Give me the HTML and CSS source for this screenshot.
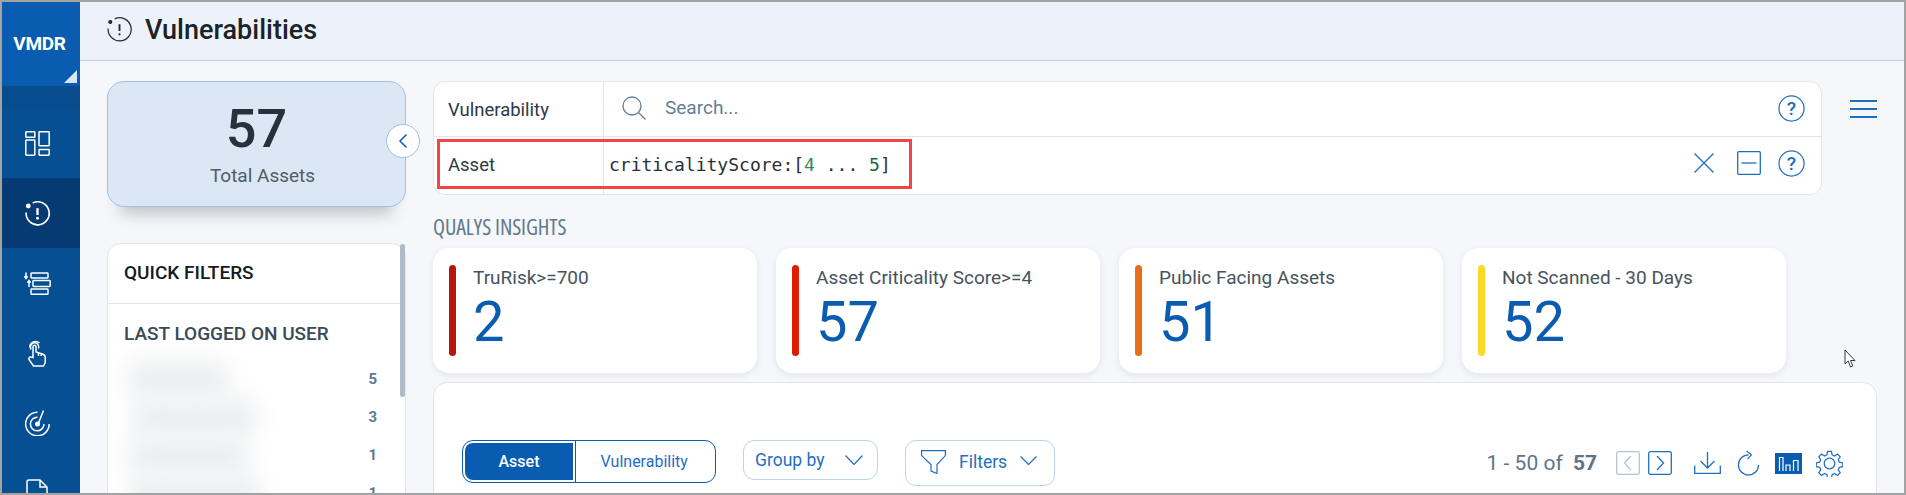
FILE: index.html
```html
<!DOCTYPE html>
<html lang="en">
<head>
<meta charset="utf-8">
<title>Vulnerabilities</title>
<link rel="stylesheet" href="styles.css">
</head>
<body>
<div class="app">
  <aside class="rail">
    <div class="brand"><span>VMDR</span><i class="corner"></i></div>
    <div class="rail-gap"></div>
    <nav class="rail-nav">
      <a class="rail-item"><svg width="25" height="25" viewBox="0 0 25 25" fill="none" stroke="#fff" stroke-width="1.5"><rect x=".8" y=".8" width="9" height="5.5" rx=".6"/><rect x=".8" y="9" width="9" height="15.2" rx=".6"/><rect x="14" y=".8" width="10.200" height="14" rx=".6"/><rect x="14" y="18.500" width="10.200" height="5.700" rx=".6"/></svg></a>
      <a class="rail-item active"><svg width="25" height="25" viewBox="0 0 26 26" fill="none" stroke="#fff" stroke-width="1.7"><path d="M8 2A12 12 0 1 1 1.200 12"/><circle cx="3.400" cy="5.200" r="2.500" fill="#fff" stroke="none"/><path d="M13 7.500v7" stroke-width="2.500"/><circle cx="13" cy="18" r="1.500" fill="#fff" stroke="none"/></svg></a>
      <a class="rail-item"><svg width="27" height="23" viewBox="0 0 27 23" fill="none" stroke="#fff" stroke-width="1.500"><rect x="7" y="1" width="17" height="5" rx=".7"/><rect x="9" y="8.500" width="17.200" height="6" rx=".7"/><rect x="7" y="17" width="17" height="5.300" rx=".7"/><path d="M2 .5v6M.4 4.300L2 6.500l1.600-2.200M5 15V8.500M3.400 10.700L5 8.500l1.600 2.200"/></svg></a>
      <a class="rail-item"><svg width="18" height="27" viewBox="0 0 18 27" fill="none" stroke="#fff" stroke-width="1.500"><path d="M3.200 9.500A4.200 4.200 0 1 1 10.500 8.500"/><path d="M1.800 7A5.800 5.800 0 0 1 11.500 3"/><path d="M5 17.500V6.800a1.500 1.500 0 0 1 3 0V12l6.500 2c1.600.6 2.700 1.500 2.700 3v5.500L15.500 26H5.500L1 19.500c-.5-1 0-2.300 1.300-2.500 1-.1 1.800.2 2.700.5z"/><path d="M10.500 12.500v3.500M13.300 13.500V16"/></svg></a>
      <a class="rail-item"><svg width="25" height="26" viewBox="0 0 25 26" fill="none" stroke="#fff" stroke-width="1.500"><path d="M12.500 2.200A11.800 11.800 0 1 0 24.200 14"/><path d="M12.500 7.200A6.800 6.800 0 1 0 19 14"/><circle cx="12.500" cy="14" r="2.500" fill="#fff" stroke="none"/><path d="M13.500 13L18.500 .5"/></svg></a>
      <a class="rail-item"><svg width="22" height="28" viewBox="0 0 22 28" fill="none" stroke="#fff" stroke-width="1.500"><path d="M1 27V3a2 2 0 0 1 2-2h11l7 7v19z"/><path d="M14 1v7h7"/></svg></a>
    </nav>
  </aside>
  <div class="main">
    <header class="topbar">
      <svg class="topbar-icon" width="25" height="25" viewBox="0 0 26 26" fill="none" stroke="#222b33" stroke-width="1.300"><path d="M8 2A12 12 0 1 1 1.200 12"/><circle cx="3.400" cy="5.200" r="2.200" fill="#222b33" stroke="none"/><path d="M13 7.500v7" stroke-width="2"/><circle cx="13" cy="18" r="1.200" fill="#222b33" stroke="none"/></svg>
      <h1>Vulnerabilities</h1>
    </header>
    <div class="content">
      <div class="left">
        <section class="total">
          <div class="total-num">57</div>
          <div class="total-label">Total Assets</div>
          <button class="collapse"><svg width="10" height="16" viewBox="0 0 10 16" fill="none" stroke="#0a5cb0" stroke-width="1.500"><path d="M8.500 1.500L2 8l6.500 6.500"/></svg></button>
        </section>
        <section class="quick">
          <div class="quick-title">QUICK FILTERS</div>
          <div class="quick-body">
            <h2>LAST LOGGED ON USER</h2>
            <ul class="users">
              <li><span class="blur b1"></span><b>5</b></li>
              <li><span class="blur b2"></span><b>3</b></li>
              <li><span class="blur b3"></span><b>1</b></li>
              <li><span class="blur b4"></span><b>1</b></li>
            </ul>
          </div>
          <i class="scroll"></i>
        </section>
      </div>
      <div class="right">
        <div class="search-row">
          <div class="search">
            <div class="s-row first">
              <div class="s-label">Vulnerability</div>
              <div class="s-field">
                <svg class="glass" width="24" height="24" viewBox="0 0 24 24" fill="none" stroke="#5f7f96" stroke-width="1.300"><circle cx="10" cy="10" r="9"/><path d="M16.500 16.500L23.500 23.500"/></svg>
                <span class="placeholder">Search...</span>
              </div>
              <div class="s-actions">
                <svg width="27" height="27" viewBox="0 0 28 28"><circle cx="14" cy="14" r="13" fill="none" stroke="#1f6fc0" stroke-width="1.300"/><text x="14" y="20.500" text-anchor="middle" class="q">?</text></svg>
              </div>
            </div>
            <div class="s-row second">
              <div class="s-label">Asset</div>
              <div class="s-field code">criticalityScore:[<em>4</em> ... <em class="dark">5</em>]</div>
              <div class="s-actions">
                <svg class="act-x" width="20" height="20" viewBox="0 0 20 20" fill="none" stroke="#1f6fc0" stroke-width="1.300"><path d="M.5.5l19 19M19.500.5l-19 19"/></svg>
                <svg width="24" height="24" viewBox="0 0 24 24" fill="none" stroke="#1f6fc0" stroke-width="1.300"><rect x=".7" y=".7" width="22.600" height="22.600" rx="1"/><path d="M4.500 12h15"/></svg>
                <svg width="27" height="27" viewBox="0 0 28 28"><circle cx="14" cy="14" r="13" fill="none" stroke="#1f6fc0" stroke-width="1.300"/><text x="14" y="20.500" text-anchor="middle" class="q">?</text></svg>
              </div>
            </div>
            <i class="redbox"></i>
          </div>
          <div class="burger"><i></i><i></i><i></i></div>
        </div>
        <div class="insights-title">QUALYS INSIGHTS</div>
        <div class="cards">
          <div class="card"><i class="bar c1"></i><div><div class="c-label">TruRisk&gt;=700</div><div class="c-num">2</div></div></div>
          <div class="card"><i class="bar c2"></i><div><div class="c-label">Asset Criticality Score&gt;=4</div><div class="c-num">57</div></div></div>
          <div class="card"><i class="bar c3"></i><div><div class="c-label">Public Facing Assets</div><div class="c-num">51</div></div></div>
          <div class="card"><i class="bar c4"></i><div><div class="c-label">Not Scanned - 30 Days</div><div class="c-num">52</div></div></div>
          <svg class="cursor" width="12" height="20" viewBox="0 0 12 20"><path d="M1 1v14l3.200-3 2.300 6 2.300-1-2.300-5.500h4.500z" fill="#fff" stroke="#222" stroke-width=".9"/></svg>
        </div>
        <section class="panel">
          <div class="seg"><span class="seg-on"><b>Asset</b></span><span class="seg-off">Vulnerability</span></div>
          <button class="drop group">Group by<svg width="18" height="10" viewBox="0 0 18 10" fill="none" stroke="#1f6fc0" stroke-width="1.200"><path d="M.5.5L9 9.500 17.500.5"/></svg></button>
          <button class="drop filters"><svg width="25" height="24" viewBox="0 0 25 24" fill="none" stroke="#1f6fc0" stroke-width="1.200"><path d="M.6.6h23.800v5L16 14.500v9l-6-2.500v-6.500L.6 5.600z"/></svg>Filters<svg class="chev-up" width="17" height="9" viewBox="0 0 17 9" fill="none" stroke="#1f6fc0" stroke-width="1.200"><path d="M.5.5l8 8 8-8"/></svg></button>
          <div class="pager">
            <span class="range">1 - 50 of <b>57</b></span>
            <svg class="prev" width="24" height="24" viewBox="0 0 24 24" fill="none" stroke="#b4c4d1" stroke-width="1.300"><rect x=".7" y=".7" width="22.600" height="22.600" rx="1.500"/><path d="M15 5l-6.500 7 6.500 7"/></svg>
            <svg class="next" width="24" height="24" viewBox="0 0 24 24" fill="none" stroke="#1f6fc0" stroke-width="1.300"><rect x=".7" y=".7" width="22.600" height="22.600" rx="1.500"/><path d="M9 5l6.500 7L9 19"/></svg>
            <svg class="dl" width="27" height="22" viewBox="0 0 27 22" fill="none" stroke="#1f6fc0" stroke-width="1.300"><path d="M13.500 0v15.500M6.500 9l7 7 7-7M.7 13.500v7.800h25.600v-7.800"/></svg>
            <svg class="rf" width="23" height="26" viewBox="0 0 24 26" fill="none" stroke="#1f6fc0" stroke-width="1.300"><path d="M12 4.500A10.500 10.500 0 1 0 22.500 15"/><path d="M10 .5L15 4.500l-4 4.500"/></svg>
            <svg class="ch" width="27" height="21" viewBox="0 0 27 21"><rect width="27" height="21" fill="#0a5cb0"/><path d="M4.500 18V4.500h3.500V18M11 18v-6h4v6M18.500 18V7.500h4.500V18" fill="none" stroke="#fff" stroke-width="1.200"/></svg>
            <svg width="27" height="27" viewBox="0 0 28 28" fill="none" stroke="#1f6fc0" stroke-width="1.300"><circle cx="14" cy="14" r="5.500"/><path d="M12 1.500h4l.7 3.600 2.500 1.100 3.100-2 2.800 2.800-2 3.100 1.100 2.500 3.600.7v4l-3.600.7-1.100 2.500 2 3.100-2.800 2.800-3.100-2-2.500 1.100-.7 3.600h-4l-.7-3.600-2.500-1.100-3.100 2-2.800-2.800 2-3.100-1.100-2.500-3.600-.7v-4l3.600-.7 1.100-2.500-2-3.100 2.800-2.800 3.100 2 2.500-1.100z"/></svg>
          </div>
        </section>
      </div>
    </div>
  </div>
</div>
</body>
</html>
```
FILE: styles.css
```css
* { box-sizing: border-box; }
html, body { margin: 0; height: 100%; }
body { background: #fff; font-family: Roboto, "Liberation Sans", sans-serif; overflow: hidden; }
.app { width: 1906px; height: 495px; border: 2px solid #a3a3a3; display: flex; overflow: hidden; background: #f5f7fa; }

.rail { width: 78px; flex: none; background: #064f93; display: flex; flex-direction: column; overflow: hidden; }
.brand { height: 84px; flex: none; background: #0a5cb0; position: relative; color: #fff; font-weight: 700; font-size: 19px; display: flex; justify-content: center; padding-top: 30px; padding-right: 3px; }
.brand span { letter-spacing: -.3px; }
.corner { position: absolute; right: 3px; bottom: 3px; width: 13px; height: 13px; background: #d9e6f4; clip-path: polygon(100% 0, 100% 100%, 0 100%); }
.rail-gap { height: 22px; flex: none; background: #064c8e; }
.rail-nav { display: flex; flex-direction: column; flex: none; }
.rail-item { height: 70px; flex: none; display: flex; align-items: center; justify-content: center; padding-right: 8px; }
.rail-item.active { background: #063a73; }

.main { flex: 1; min-width: 0; display: flex; flex-direction: column; }
.topbar { height: 59px; flex: none; background: #edf2f9; border-bottom: 1px solid #b9d1e9; display: flex; align-items: center; padding-left: 27px; padding-bottom: 3px; }
.topbar h1 { margin: 0 0 0 13px; font-size: 27px; font-weight: 500; color: #1b2229; }
.topbar-icon { flex: none; }

.content { flex: 1; display: flex; min-height: 0; padding: 20px 0 0 27px; }
.left { width: 299px; flex: none; margin-right: 27px; }
.total { height: 126px; position: relative; background: #dbe7f4; border: 1px solid #9dc0e6; border-radius: 17px; box-shadow: 0 20px 16px -14px rgba(50,60,70,.3); text-align: center; padding-top: 15px; }
.total-num { font-size: 54px; line-height: 64px; font-weight: 500; color: #27313b; }
.total-label { font-size: 19px; line-height: 22px; color: #4f5d69; margin: 4px 0 0 12px; }
.collapse { position: absolute; right: -15px; top: 42px; width: 34px; height: 34px; border-radius: 50%; border: 1px solid #9dc0e6; background: #fff; padding: 0; display: flex; align-items: center; justify-content: center; }

.quick { margin-top: 36px; height: 300px; position: relative; background: #fff; border: 1px solid #e2e6ea; border-radius: 14px 14px 0 0; }
.quick-title { height: 60px; border-bottom: 1px solid #dfe3e8; padding: 18px 16px 0; font-size: 19px; line-height: 22px; font-weight: 500; color: #14191f; }
.quick-body { padding: 18px 16px 0; }
.quick-body h2 { margin: 0; font-size: 19px; line-height: 24px; font-weight: 500; color: #3a4a56; }
.users { list-style: none; margin: 0; padding: 0; }
.users li { height: 38px; display: flex; justify-content: space-between; align-items: center; }
.users li:first-child { margin-top: 14px; }
.users b { font-size: 15px; font-weight: 700; color: #5f7a8e; margin-right: 12px; }
.blur { display: block; height: 36px; background: #eceef0; filter: blur(11px); border-radius: 12px; }
.b1 { width: 100px; margin-left: 4px; }
.b2 { width: 125px; margin-left: 8px; }
.b3 { width: 120px; margin-left: 4px; }
.b4 { width: 130px; margin-left: 6px; }
.scroll { position: absolute; right: 0; top: 0; width: 5px; height: 153px; background: #aebcc8; border-radius: 3px; }

.right { flex: 1; min-width: 0; }
.search-row { display: flex; align-items: flex-start; }
.search { width: 1389px; height: 114px; flex: none; position: relative; background: #fff; border: 1px solid #e1e5ea; border-radius: 12px; }
.s-row { display: flex; height: 57px; }
.s-row.first { height: 55px; border-bottom: 1px solid #e1e5ea; }
.s-label { width: 170px; flex: none; border-right: 1px solid #e1e5ea; padding: 16px 0 0 14px; font-size: 18.500px; line-height: 24px; color: #2e3a44; }
.s-field { flex: 1; display: flex; align-items: center; padding-left: 18px; }
.placeholder { margin: -4px 0 0 19px; font-size: 19px; color: #5f7f96; }
.glass { flex: none; margin-top: -2px; }
.code { font-family: "DejaVu Sans Mono", monospace; font-size: 18px; color: #2a2f35; padding-left: 5px; white-space: pre; margin-top: -2px; }
.code em { font-style: normal; color: #2f8a5e; }
.code em.dark { color: #1b6a46; }
.s-actions { display: flex; align-items: center; padding-right: 16px; }
.first .s-actions { padding-bottom: 2px; }
.second .s-actions { padding-bottom: 5px; }
.act-x { margin-right: 23px; }
.second .s-actions svg:nth-child(2) { margin-right: 17px; }
.q { font: 500 20px Roboto, sans-serif; fill: #1f6fc0; }
.redbox { position: absolute; left: 3px; top: 57px; width: 475px; height: 50px; border: 3px solid #f34545; pointer-events: none; }
.burger { margin: 19px 0 0 28px; display: flex; flex-direction: column; gap: 6.500px; }
.burger i { display: block; width: 27px; height: 1.500px; background: #1f6fc0; }

.insights-title { margin-top: 19px; font-family: "Open Sans", sans-serif; font-stretch: condensed; font-size: 22px; line-height: 24px; color: #62798b; letter-spacing: -.1px; }
.cards { display: flex; gap: 19px; margin-top: 10px; position: relative; }
.card { width: 324px; height: 125px; background: #fff; border-radius: 16px; box-shadow: 0 2px 6px rgba(60,70,80,.1); display: flex; padding: 17px 12px 17px 16px; flex: none; }
.card .bar { width: 7px; height: 91px; border-radius: 3.500px; flex: none; margin-right: 17px; }
.c1 { background: #b7160f; } .c2 { background: #e01b00; } .c3 { background: #e76f1a; } .c4 { background: #fbd926; }
.c-label { font-size: 19px; line-height: 24px; color: #47535d; margin-top: 1px; white-space: nowrap; }
.c-num { font-size: 56px; line-height: 60px; color: #0a5cb0; margin-top: 2px; }
.cursor { position: absolute; left: 1411px; top: 101px; }

.panel { margin-top: 9px; width: 1444px; height: 120px; background: #fff; border: 1px solid #e1e5ea; border-radius: 14px 14px 0 0; display: flex; align-items: flex-start; padding: 57px 33px 0 28px; }
.seg { width: 254px; height: 43px; flex: none; border: 1.500px solid #0a5cb0; border-radius: 11px; display: flex; font-size: 16px; color: #1f6fc0; padding: 2px; }
.seg-on { width: 108px; background: #0a5cb0; color: #fff; border-radius: 8px 0 0 8px; display: flex; align-items: center; justify-content: center; }
.seg-on b { font-weight: 500; }
.seg-off { flex: 1; border-left: 1.500px solid #0a5cb0; margin: -2px 0 -2px 1.500px; display: flex; align-items: center; justify-content: center; }
.drop { height: 40px; flex: none; border: 1px solid #bcd4ee; border-radius: 11px; background: #fff; font: 400 17.500px Roboto, sans-serif; color: #1f6fc0; display: flex; align-items: center; padding: 0; }
.group { width: 135px; margin-left: 27px; padding-left: 11px; gap: 20px; }
.filters { width: 150px; height: 46px; margin-left: 27px; padding-left: 15px; gap: 13px; padding-bottom: 2px; }
.chev-up { margin-top: -4px; }
.pager { margin-left: auto; display: flex; align-items: center; height: 46px; }
.range { font-size: 21px; color: #5f7484; margin-right: 19px; white-space: nowrap; }
.range b { font-weight: 700; margin-left: 5px; }
.prev { margin-right: 8px; }
.next { margin-right: 22px; }
.dl { margin-right: 16px; }
.rf { margin-right: 15px; }
.ch { margin-right: 14px; }
```
